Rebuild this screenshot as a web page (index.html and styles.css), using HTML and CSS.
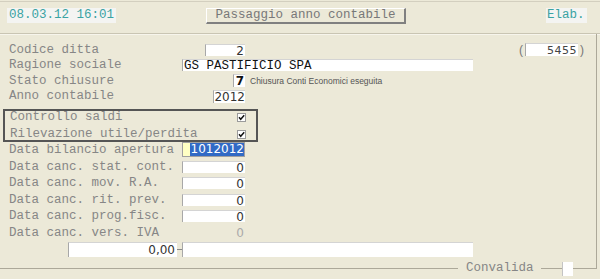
FILE: index.html
```html
<!DOCTYPE html>
<html lang="it">
<head>
<meta charset="utf-8">
<title>Passaggio anno contabile</title>
<link rel="stylesheet" href="styles.css">
</head>
<body>
<div class="app">
  <header class="topbar">
    <div class="stamp">08.03.12 16:01</div>
    <div class="btn">Passaggio anno contabile</div>
    <div class="elab">Elab.</div>
  </header>

  <main class="panel">
    <div class="row">
      <span class="lbl">Codice ditta</span>
      <span class="fld"><span class="box num w40">2</span></span>
      <span class="ext">
        <span class="par">(</span>
        <span class="box code">5455</span>
        <span class="par">)</span>
      </span>
    </div>
    <div class="row">
      <span class="lbl">Ragione sociale</span>
      <span class="box wide">GS PASTIFICIO SPA</span>
    </div>
    <div class="row">
      <span class="lbl">Stato chiusure</span>
      <span class="fld"><span class="box num w12 bold">7</span></span>
      <span class="note">Chiusura Conti Economici eseguita</span>
    </div>
    <div class="row">
      <span class="lbl">Anno contabile</span>
      <span class="fld"><span class="box num w32">2012</span></span>
    </div>

    <div class="group">
      <div class="grow">
        <span class="glbl">Controllo saldi</span>
        <svg class="chk" width="9" height="9" viewBox="0 0 9 9"><rect x="0.5" y="0.5" width="8" height="8" fill="#fff" stroke="#9a9a9a"/><path d="M2 4.3 L3.7 6.3 L7.2 2.2" stroke="#111" stroke-width="1.5" fill="none"/></svg>
      </div>
      <div class="grow">
        <span class="glbl">Rilevazione utile/perdita</span>
        <svg class="chk" width="9" height="9" viewBox="0 0 9 9"><rect x="0.5" y="0.5" width="8" height="8" fill="#fff" stroke="#9a9a9a"/><path d="M2 4.3 L3.7 6.3 L7.2 2.2" stroke="#111" stroke-width="1.5" fill="none"/></svg>
      </div>
    </div>

    <div class="row tall">
      <span class="lbl">Data bilancio apertura</span>
      <span class="fld"><span class="box sel"><span class="hl">1012012</span></span></span>
    </div>
    <div class="row tall">
      <span class="lbl">Data canc. stat. cont.</span>
      <span class="fld"><span class="box num date">0</span></span>
    </div>
    <div class="row tall">
      <span class="lbl">Data canc. mov. R.A.</span>
      <span class="fld"><span class="box num date">0</span></span>
    </div>
    <div class="row tall">
      <span class="lbl">Data canc. rit. prev.</span>
      <span class="fld"><span class="box num date">0</span></span>
    </div>
    <div class="row tall">
      <span class="lbl">Data canc. prog.fisc.</span>
      <span class="fld"><span class="box num date">0</span></span>
    </div>
    <div class="row tall">
      <span class="lbl">Data canc. vers. IVA</span>
      <span class="fld"><span class="plain">0</span></span>
    </div>
    <div class="row tall totals">
      <span class="box num amount">0,00</span>
      <span class="dash"></span>
      <span class="box wide big"></span>
    </div>
  </main>

  <footer class="foot">
    <span class="line l1"></span>
    <span class="cap">Convalida</span>
    <span class="line l2"></span>
    <span class="cb"></span>
    <span class="tail"></span>
  </footer>
</div>
</body>
</html>
```

FILE: styles.css
```css
* { box-sizing: border-box; }
html, body { margin: 0; padding: 0; }
body {
  background: #ece9d8;
  font-family: "Liberation Mono", "Courier New", monospace;
  font-size: 12.5px;
  color: #868686;
  width: 600px;
  height: 279px;
  overflow: hidden;
}
.app { padding-top: 1px; }

.topbar {
  display: flex;
  align-items: flex-start;
  height: 33px;
  border-top: 1px solid #d3cfbf;
  border-bottom: 1px solid #c9c5b3;
  box-shadow: 0 1px 0 #f7f5ec;
  padding: 6px 13px 0 7px;
}
.stamp {
  width: 109px;
  height: 15px;
  line-height: 15px;
  background: #f4f4f2;
  color: #3aa3a3;
  padding-left: 2px;
}
.btn {
  margin-left: 90px;
  width: 200px;
  height: 16px;
  line-height: 13px;
  text-align: center;
  color: #787878;
  border-top: 1px solid #fff;
  border-left: 1px solid #fff;
  border-right: 2px solid #808080;
  border-bottom: 2px solid #808080;
}
.elab {
  margin-left: auto;
  width: 41px;
  height: 15px;
  line-height: 15px;
  background: #f4f4f2;
  color: #3aa3a3;
  padding-left: 1px;
}

.panel {
  width: 597px;
  height: 227px;
  border-right: 1px solid #aca899;
  padding-top: 8px;
}
.row {
  display: flex;
  align-items: center;
  height: 15.5px;
  padding-left: 9px;
}
.row.tall { height: 16.6px; }
.lbl { width: 173px; white-space: pre; flex: none; }
.fld { width: 63px; display: flex; justify-content: flex-end; flex: none; }

.box {
  display: block;
  background: #fff;
  height: 12px;
  line-height: 12px;
  color: #111;
  border-top: 1px solid #d4d4d4;
  border-left: 1px solid #a8a8a8;
  white-space: pre;
}
.num {
  font-family: "DejaVu Sans", "Liberation Sans", sans-serif;
  font-size: 12px;
  text-align: right;
  padding-right: 1px;
  color: #333;
}
.w40 { width: 40px; }
.w32 { width: 32px; height: 13px; line-height: 13px; padding-right: 0; }
.w12 { width: 12px; height: 13px; line-height: 13px; }
.bold { font-weight: bold; color: #111; }
.wide { width: 291px; padding-left: 1px; }
.note {
  margin-left: 5px;
  font-family: "Liberation Sans", Arial, sans-serif;
  font-size: 8.5px;
  color: #555;
}
.ext {
  margin-left: auto;
  margin-right: 12px;
  display: flex;
  align-items: center;
}
.par {
  font-family: "Liberation Sans", Arial, sans-serif;
  font-size: 12px;
  color: #777;
  width: 4px;
}
.code {
  width: 53px;
  height: 13px;
  line-height: 13px;
  margin: 0 2px;
  font-family: "DejaVu Sans", sans-serif;
  font-size: 11px;
  letter-spacing: 0.5px;
  text-align: right;
  padding-right: 1px;
  color: #444;
}

.group {
  margin: 4.5px 0 0.2px 3px;
  width: 255px;
  height: 33px;
  padding-top: 1px;
  border: 2px solid #555;
  display: flex;
  flex-direction: column;
  justify-content: space-between;
}
.grow {
  display: flex;
  align-items: center;
  height: 11px;
  padding-left: 5px;
}
.glbl { flex: 1; white-space: pre; }
.chk { display: block; margin-right: 10px; }

.sel {
  width: 63px;
  height: 15px;
  line-height: 13px;
  border: 1px solid #a0a0a0;
  background: #ffffc4;
  display: flex;
  justify-content: flex-end;
}
.hl {
  background: #316ac5;
  color: #fff;
  font-family: "DejaVu Sans", sans-serif;
  font-size: 12px;
  padding: 0 0 0 1px;
}
.date { width: 63px; }
.plain {
  font-family: "DejaVu Sans", sans-serif;
  font-size: 12px;
  color: #aaa;
  padding-right: 1px;
}

.totals { padding-left: 68px; }
.amount { width: 109px; height: 15px; line-height: 15px; padding-right: 2px; }
.dash { width: 5px; height: 1px; background: #8a8a8a; }
.big { height: 15px; }

.foot {
  display: flex;
  align-items: center;
  width: 597px;
  height: 15px;
}
.line { height: 1px; background: #aca899; }
.l1 { flex: 1; }
.cap { margin: 0 7.5px 0 8px; line-height: 15px; color: #868686; }
.l2 { width: 21px; }
.cb { width: 11px; height: 14px; background: #fff; border-left: 1px solid #c4c4c4; }
.tail {
  align-self: flex-start;
  width: 24px;
  height: 8px;
  border-right: 1px solid #aca899;
  border-bottom: 1px solid #aca899;
}
```
